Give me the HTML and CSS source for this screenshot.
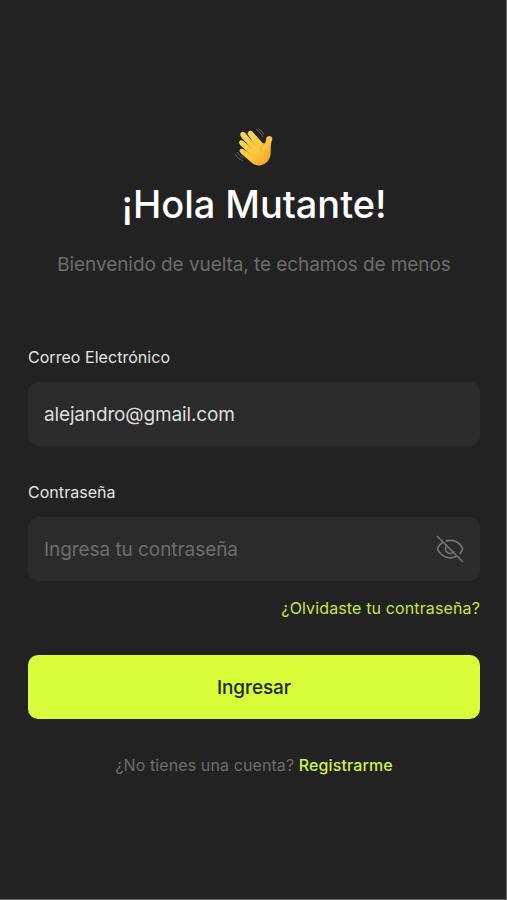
FILE: index.html
```html
<!DOCTYPE html>
<html lang="es">
  <head>
    <meta charset="UTF-8" />
    <meta name="viewport" content="width=device-width, initial-scale=1.0" />
    <title>Iniciar sesión</title>
    <link rel="stylesheet" href="styles.css">
  </head>
  <body>
    <main class="login">
      <header class="header">
        <svg class="wave" viewBox="0 0 180 168" aria-hidden="true">
          <defs>
            <linearGradient id="skin" x1="0" y1="0" x2="1" y2="1">
              <stop offset="0" stop-color="#ffd95a" />
              <stop offset="0.6" stop-color="#fcc53c" />
              <stop offset="1" stop-color="#e8991f" />
            </linearGradient>
          </defs>
          <g fill="none" stroke="#5b6064" stroke-width="3" stroke-linecap="round">
            <path d="M97 34Q111 42 117 57" />
            <path d="M104 32Q115 39 119 49" />
            <path d="M33 108Q39 123 55 128" />
            <path d="M40 103Q45 115 58 120" />
          </g>
          <path
            fill="url(#skin)"
            d="M73 41C77 37 83 38 87 43L115 74C119 78 124 77 125 71L127 61C129 54 137 52 142 56C147 60 145 64 143 70C139 81 141 91 140 105C139 122 132 131 122 137C110 144 96 144 87 137L52 107C46 102 45 97 49 94C53 91 57 93 61 96L70 101L49 82C44 77 44 71 48 68C52 65 57 68 61 71L77 85L53 59C48 53 47 47 52 43C57 39 62 43 66 48L87 72L73 52C70 48 70 44 73 41Z"
          />
          <g fill="none" stroke="#df9d26" stroke-width="2.5" stroke-linecap="round">
            <path d="M80 65L94 82" />
            <path d="M70 80L83 93" />
            <path d="M64 96L76 107" />
            <path d="M121 78Q109 83 111 97" />
          </g>
        </svg>
        <h1 class="title">¡Hola Mutante!</h1>
        <p class="subtitle">Bienvenido de vuelta, te echamos de menos</p>
      </header>

      <form class="form">
        <label class="label" for="email">Correo Electrónico</label>
        <div class="field">
          <input id="email" class="input" type="email" value="alejandro@gmail.com" />
        </div>

        <label class="label" for="password">Contraseña</label>
        <div class="field">
          <input id="password" class="input" type="password" placeholder="Ingresa tu contraseña" />
          <button class="toggle" type="button" aria-label="Mostrar contraseña">
            <svg class="eye" viewBox="0 0 28 28">
              <path d="M1.5 1.5L26.5 26.5" />
              <path d="M10.5 5.9C18 3.8 24 7.8 26.3 12.8C27 14.4 26 16.2 24.2 18.4" />
              <path d="M6.7 7.4C4.3 9.1 2.5 11.2 1.7 13.1C1 14.9 4.2 19.2 8.2 21.3C12 23.4 16.4 23.2 19.8 21.6" />
              <path d="M10.6 10.7C8.7 13 9.3 16.2 11.4 17.6C13.5 19 16.2 18.4 17.7 17" />
            </svg>
          </button>
        </div>

        <a class="forgot" href="#">¿Olvidaste tu contraseña?</a>
        <button class="submit" type="submit">Ingresar</button>
      </form>

      <p class="register">¿No tienes una cuenta? <a class="register-link" href="#">Registrarme</a></p>
    </main>
  </body>
</html>
```

FILE: styles.css
```css
* {
  box-sizing: border-box;
}

body {
  margin: 0;
  background-color: #222222;
  color: #ffffff;
  font-family: Inter, sans-serif;
}

.login {
  min-height: 900px;
  padding: 118px 26px 0 28px;
  border-right: 1px solid #656565;
  border-bottom: 1px solid #656565;
}

.header {
  display: flex;
  flex-direction: column;
  align-items: center;
}

.wave {
  display: block;
  width: 60px;
  height: 56px;
}

.title {
  margin: 6px 0 0;
  font-size: 38px;
  font-weight: 500;
  line-height: 48px;
  letter-spacing: -0.05px;
}

.subtitle {
  margin: 25px 0 0;
  color: #6d6d6d;
  font-size: 19px;
  line-height: 24px;
  letter-spacing: -0.07px;
  white-space: nowrap;
}

.form {
  display: flex;
  flex-direction: column;
  margin-top: 70px;
}

.label {
  margin-bottom: 15px;
  color: #e4e4e4;
  font-size: 16px;
  line-height: 20px;
  letter-spacing: 0.04px;
}

.field {
  display: flex;
  align-items: center;
  height: 64px;
  margin-bottom: 36px;
  padding: 0 16px;
  border-radius: 10px;
  background-color: #2b2b2b;
}

.input {
  flex: 1;
  min-width: 0;
  padding: 1px 0 0;
  border: none;
  outline: none;
  background: none;
  color: #dfdfdf;
  font-family: inherit;
  font-size: 19px;
  letter-spacing: -0.15px;
}

.input::placeholder {
  color: #6d6d6d;
  letter-spacing: -0.06px;
  opacity: 1;
}

.toggle {
  padding: 0;
  border: none;
  background: none;
  cursor: pointer;
}

.eye {
  display: block;
  width: 28px;
  height: 28px;
  fill: none;
  stroke: #747474;
  stroke-width: 1.7;
  stroke-linecap: round;
}

.forgot {
  align-self: flex-end;
  margin-top: -19px;
  color: #c8e645;
  font-size: 16px;
  line-height: 20px;
  letter-spacing: 0.13px;
  text-decoration: none;
}

.submit {
  height: 64px;
  margin-top: 37px;
  border: none;
  border-radius: 10px;
  background-color: #d8fd39;
  color: #222810;
  font-family: inherit;
  font-size: 19px;
  font-weight: 500;
  letter-spacing: -0.1px;
  cursor: pointer;
}

.register {
  margin: 36px 0 0;
  color: #6d6d6d;
  font-size: 16px;
  line-height: 20px;
  letter-spacing: 0.1px;
  text-align: center;
}

.register-link {
  color: #d3f345;
  font-weight: 500;
  text-decoration: none;
}
```
